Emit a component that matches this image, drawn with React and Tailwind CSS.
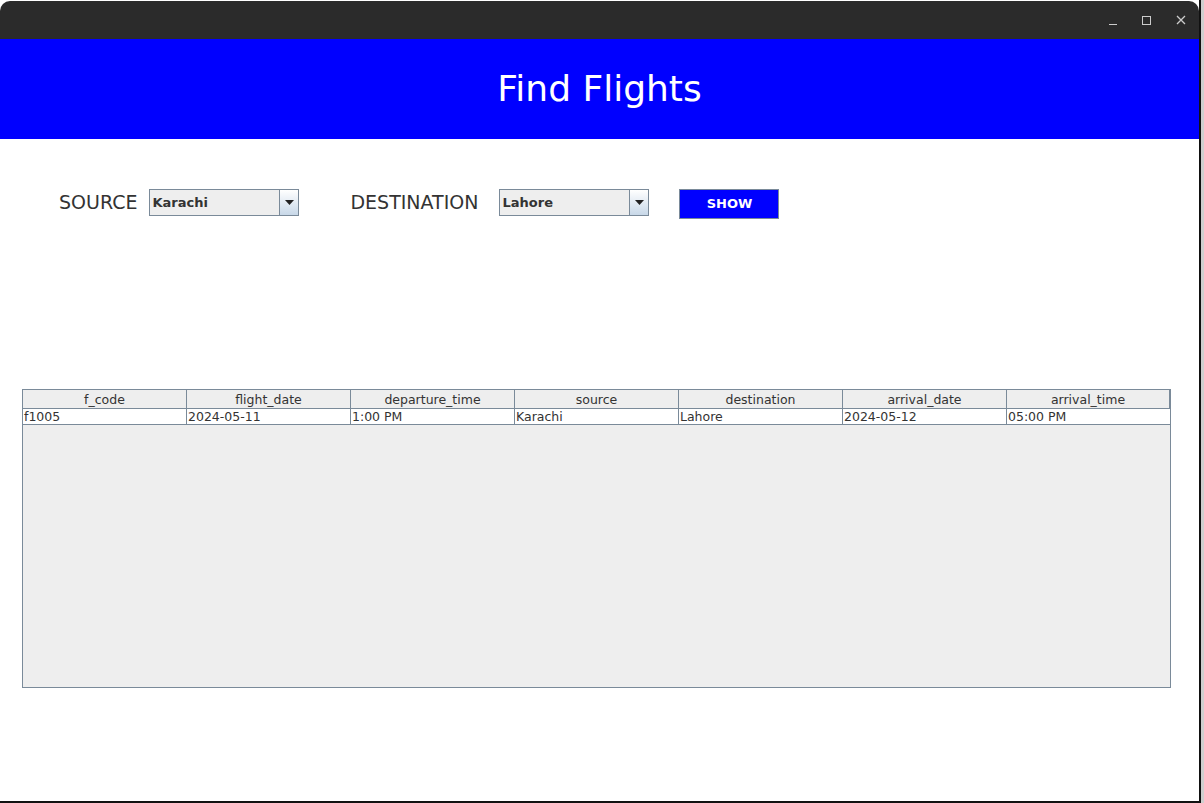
import React from 'react';

const cols = ['f_code', 'flight_date', 'departure_time', 'source', 'destination', 'arrival_date', 'arrival_time'];
const row = ['f1005', '2024-05-11', '1:00 PM', 'Karachi', 'Lahore', '2024-05-12', '05:00 PM'];

const Combo = ({ value }) => (
  <div className="flex h-[27px] w-[150px] border border-[#7a8a99] bg-[#eeeeee]">
    <div className="flex flex-1 items-center pl-[2px] text-[13px] font-bold text-[#333333]">{value}</div>
    <div className="flex w-[19px] items-center justify-center border-l border-[#7a8a99] bg-gradient-to-b from-[#ffffff] to-[#c8d8e8]">
      <svg width="9" height="5" viewBox="0 0 9 5">
        <path d="M0 0 H9 L4.5 5 Z" fill="#222" />
      </svg>
    </div>
  </div>
);

const App = () => {
  return (
    <div className="h-[803px] w-[1204px] overflow-hidden bg-[#cfcfcf] font-['DejaVu_Sans',sans-serif]">
      <div className="flex h-[803px] w-[1201px] flex-col border-r-2 border-b-2 border-[#111] bg-white pt-[1px]">
        {/* Title bar */}
        <div className="flex h-[38px] items-center justify-end gap-[25px] rounded-t-[10px] bg-[#2b2b2b] pr-[13px]">
          <span className="mt-[8px] block h-[1px] w-[8px] bg-[#cccccc]"></span>
          <span className="block h-[9px] w-[9px] border border-[#cccccc]"></span>
          <svg width="10" height="10" viewBox="0 0 10 10">
            <path d="M1 1 L9 9 M9 1 L1 9" stroke="#cccccc" strokeWidth="1.3" />
          </svg>
        </div>

        {/* Header */}
        <div className="flex h-[100px] items-center justify-center bg-[#0000ff]">
          <h1 className="text-[36px] text-white">Find Flights</h1>
        </div>

        {/* Filters */}
        <div className="flex items-start pl-[59px] pt-[50px]">
          <span className="mt-[1px] text-[19px] leading-[24px] text-[#333333]">SOURCE</span>
          <div className="ml-[12px]"><Combo value="Karachi" /></div>
          <span className="ml-[51px] mt-[1px] text-[19px] leading-[24px] text-[#333333]">DESTINATION</span>
          <div className="ml-[21px]"><Combo value="Lahore" /></div>
          <button className="ml-[30px] h-[30px] w-[100px] border border-[#7a8a99] bg-[#0000ff] text-[13px] font-bold text-white">
            SHOW
          </button>
        </div>

        {/* Table */}
        <div className="ml-[22px] mt-[170px] h-[299px] w-[1149px] border border-[#7a8a99] bg-[#eeeeee]">
          <div className="grid grid-cols-7 w-[1148px]">
            {cols.map((c, i) => (
              <div key={c} className={`h-[19px] border-b border-[#7a8a99] text-center text-[12.5px] leading-[19px] text-[#333333] ${i < 6 ? 'border-r' : 'border-r-2'}`}>
                {c}
              </div>
            ))}
            {row.map((c, i) => (
              <div key={i} className="h-[16px] border-b border-r border-[#7a8a99] bg-white pl-[1px] text-[12.5px] leading-[15px] text-[#333333]">
                {c}
              </div>
            ))}
          </div>
        </div>
      </div>
    </div>
  );
};

export default App;
